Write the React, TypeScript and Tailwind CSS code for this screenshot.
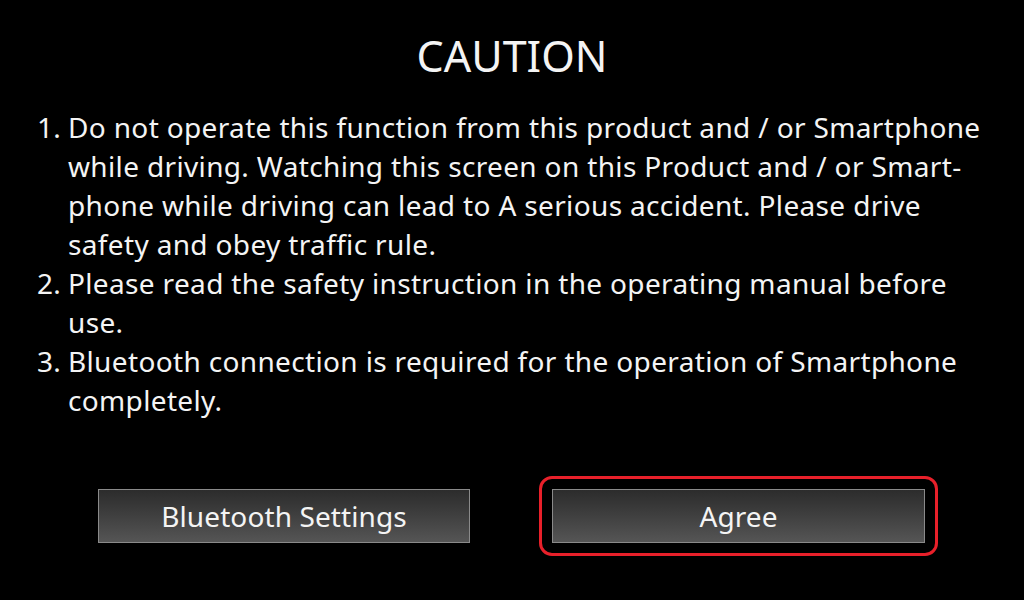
import React from "react";

const items: { n: string; lines: string[] }[] = [
  {
    n: "1.",
    lines: [
      "Do not operate this function from this product and / or Smartphone",
      "while driving. Watching this screen on this Product and / or Smart-",
      "phone while driving can lead to A serious accident. Please drive",
      "safety and obey traffic rule.",
    ],
  },
  {
    n: "2.",
    lines: [
      "Please read the safety instruction in the operating manual before",
      "use.",
    ],
  },
  {
    n: "3.",
    lines: [
      "Bluetooth connection is required for the operation of Smartphone",
      "completely.",
    ],
  },
];

export default function App() {
  return (
    <div
      className="w-[1024px] h-[600px] bg-black text-white flex flex-col overflow-hidden"
      style={{ fontFamily: '"Noto Sans", "Open Sans", sans-serif' }}
    >
      <div className="text-center text-[43px] leading-[52px] pt-[30px] text-[#f4f4f4]">
        CAUTION
      </div>
      <div className="mt-[26px] pl-[37px] flex flex-col text-[28px] leading-[39px] tracking-[0.35px] text-[#f4f4f4]">
        {items.map((it) => (
          <div key={it.n} className="flex">
            <div className="w-[31px] shrink-0">{it.n}</div>
            <div className="flex flex-col whitespace-nowrap">
              {it.lines.map((l, i) => (
                <div key={i}>{l}</div>
              ))}
            </div>
          </div>
        ))}
      </div>
      <div className="mt-auto mb-[44px] flex items-center">
        <div className="ml-[98px] w-[372px] h-[54px] border border-[#8a8a8a] bg-gradient-to-b from-[#2c2c2c] to-[#555555] flex items-center justify-center text-[28px] tracking-[0.1px] text-[#f4f4f4]">
          Bluetooth Settings
        </div>
        <div className="ml-[69px] w-[399px] h-[80px] rounded-[13px] border-[3px] border-[#e8202a] flex items-center justify-center">
          <div className="w-[373px] h-[54px] border border-[#8a8a8a] bg-gradient-to-b from-[#2c2c2c] to-[#555555] flex items-center justify-center text-[28px] tracking-[0.1px] text-[#f4f4f4]">
            Agree
          </div>
        </div>
      </div>
    </div>
  );
}
